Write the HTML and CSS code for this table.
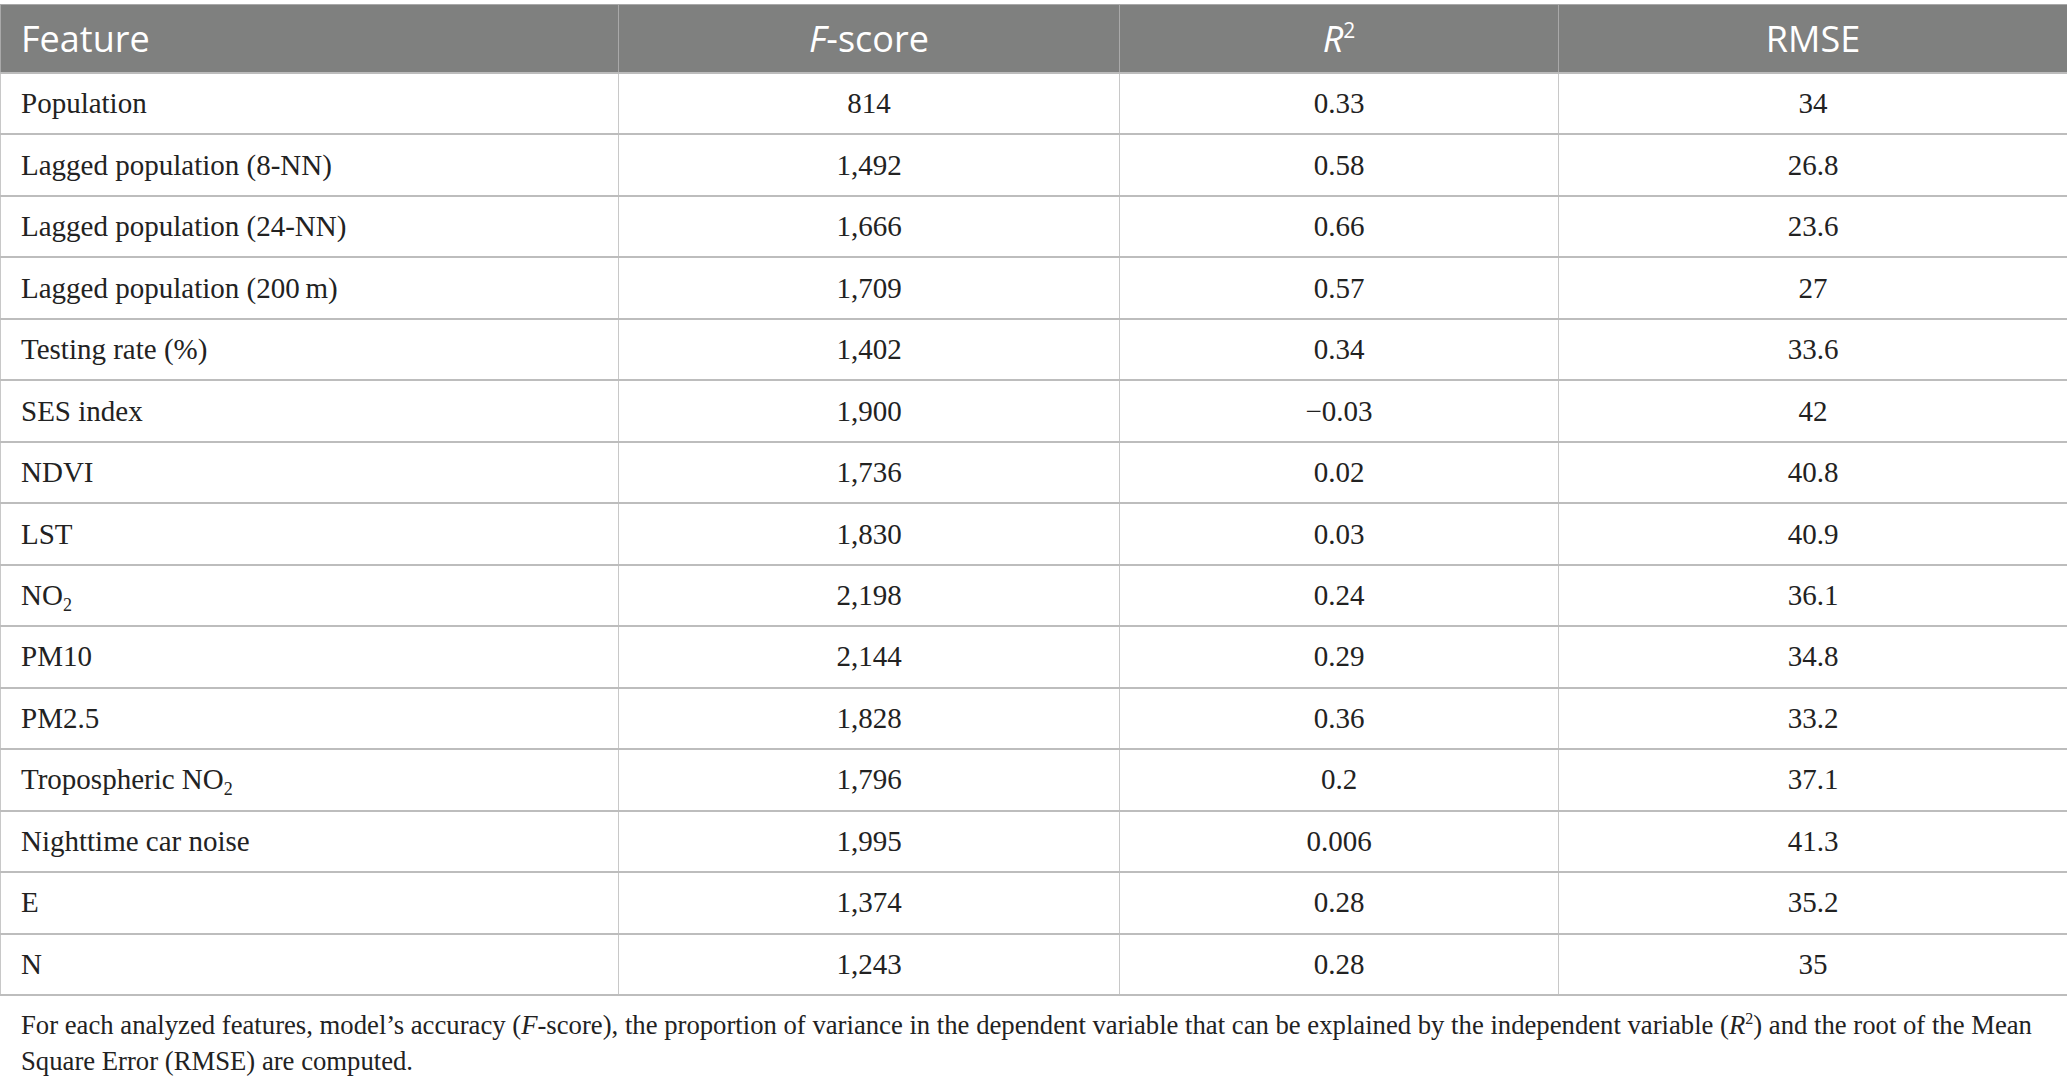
FILE: index.html
```html
<!DOCTYPE html>
<html>
<head>
    <meta charset="UTF-8">
    <title>Feature accuracy table</title>
    <link rel="stylesheet" href="styles.css">
</head>
<body>
    <div class="wrap">
        <table class="results">
            <colgroup>
                <col class="c-feature">
                <col class="c-fscore">
                <col class="c-r2">
                <col class="c-rmse">
            </colgroup>
            <thead>
                <tr><th class="left">Feature</th><th><i>F</i>-score</th><th><i>R</i><sup>2</sup></th><th>RMSE</th></tr>
            </thead>
            <tbody>
                <tr><td class="left">Population</td><td>814</td><td>0.33</td><td>34</td></tr>
                <tr><td class="left">Lagged population (8-NN)</td><td>1,492</td><td>0.58</td><td>26.8</td></tr>
                <tr><td class="left">Lagged population (24-NN)</td><td>1,666</td><td>0.66</td><td>23.6</td></tr>
                <tr><td class="left">Lagged population (200&#8201;m)</td><td>1,709</td><td>0.57</td><td>27</td></tr>
                <tr><td class="left">Testing rate (%)</td><td>1,402</td><td>0.34</td><td>33.6</td></tr>
                <tr><td class="left">SES index</td><td>1,900</td><td>&minus;0.03</td><td>42</td></tr>
                <tr><td class="left">NDVI</td><td>1,736</td><td>0.02</td><td>40.8</td></tr>
                <tr><td class="left">LST</td><td>1,830</td><td>0.03</td><td>40.9</td></tr>
                <tr><td class="left">NO<sub>2</sub></td><td>2,198</td><td>0.24</td><td>36.1</td></tr>
                <tr><td class="left">PM10</td><td>2,144</td><td>0.29</td><td>34.8</td></tr>
                <tr><td class="left">PM2.5</td><td>1,828</td><td>0.36</td><td>33.2</td></tr>
                <tr><td class="left">Tropospheric NO<sub>2</sub></td><td>1,796</td><td>0.2</td><td>37.1</td></tr>
                <tr><td class="left">Nighttime car noise</td><td>1,995</td><td>0.006</td><td>41.3</td></tr>
                <tr><td class="left">E</td><td>1,374</td><td>0.28</td><td>35.2</td></tr>
                <tr><td class="left">N</td><td>1,243</td><td>0.28</td><td>35</td></tr>
            </tbody>
        </table>
        <p class="note">For each analyzed features, model&rsquo;s accuracy (<i>F</i>-score), the proportion of variance in the dependent variable that can be explained by the independent variable (<i>R</i><sup>2</sup>) and the root of the Mean Square Error (RMSE) are computed.</p>
    </div>
</body>
</html>
```

FILE: styles.css
```css
body {
    margin: 0;
    background: #fff;
    color: #222;
    font-family: "Liberation Serif", "Times New Roman", serif;
}
.wrap {
    padding-top: 4px;
}
.results {
    width: 100%;
    border-collapse: collapse;
    table-layout: fixed;
}
.c-feature { width: 618px; }
.c-fscore { width: 501px; }
.c-r2 { width: 439px; }
.c-rmse { width: 509px; }

.results th {
    background: #7f807f;
    color: #fff;
    font-family: "Open Sans", "Noto Sans", sans-serif;
    font-weight: normal;
    font-size: 36px;
    height: 67px;
    padding: 0 20px;
    text-align: center;
    border: 1px solid #a9a9a9;
    border-bottom: 2px solid #bcbcbc;
}
.results th sup {
    font-size: 21px;
    vertical-align: 14px;
    line-height: 0;
}
.results td {
    font-size: 29px;
    height: 59.47px;
    padding: 0 20px;
    text-align: center;
    border-left: 1px solid #c8c8c8;
    border-right: 1px solid #c8c8c8;
    border-bottom: 2px solid #bdbdbd;
}
.results .left {
    text-align: left;
}
.results td sub {
    font-size: 18px;
    vertical-align: -6px;
    line-height: 0;
}
.note {
    margin: 11px 0 0;
    padding: 0 8px 0 21px;
    font-size: 26.7px;
    line-height: 36px;
}
.note sup {
    font-size: 16px;
    vertical-align: 10px;
    line-height: 0;
}
```
